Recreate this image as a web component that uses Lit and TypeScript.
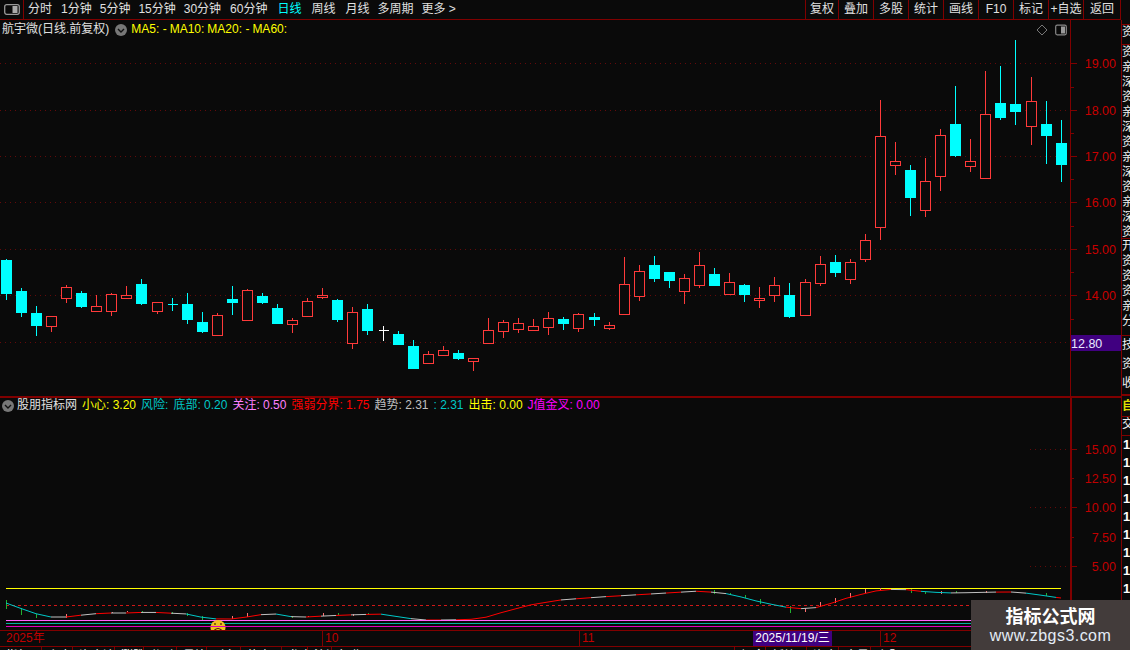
import { LitElement, html, css, svg } from "lit";
import { customElement } from "lit/decorators.js";

type C = [number, number, number, number, number]; // 0 red / 1 cyan / 2 white, bodyTop, bodyBottom, wickTop, wickBottom
const CANDLES: C[] = [
  [1,260,294,259,300],[1,291,313,288,317],[1,313,326,306,336],[0,316,326,316,332],[0,287,298,285,303],
  [1,293,307,291,308],[0,306,311,295,311],[0,294,311,293,316],[0,295,298,286,298],[1,284,304,279,305],
  [0,302,311,302,314],[1,304,304,298,311],[1,304,320,293,324],[1,322,332,312,333],[0,315,335,313,336],
  [1,299,303,286,315],[0,290,320,289,320],[1,296,303,293,304],[1,308,324,304,324],[0,320,324,318,333],
  [0,301,316,298,316],[0,295,297,288,299],[1,300,320,299,322],[0,312,343,307,349],[1,309,331,304,335],
  [2,330,330,326,341],[1,334,345,331,345],[1,346,369,340,369],[0,354,363,351,363],[0,350,355,346,355],
  [1,353,359,350,360],[0,358,361,358,371],[0,330,343,318,343],[0,322,331,320,338],[0,323,329,318,333],
  [0,326,330,319,330],[0,318,327,312,335],[1,319,324,317,330],[0,314,328,313,332],[1,317,320,313,326],
  [0,325,328,322,330],[0,284,314,257,314],[0,271,296,265,301],[1,265,279,256,282],[1,272,281,272,288],
  [0,278,291,274,304],[0,265,285,252,288],[1,274,286,268,286],[0,282,294,273,294],[1,285,295,284,302],
  [0,298,300,287,308],[0,285,295,277,302],[1,295,317,283,318],[0,282,315,279,315],[0,264,283,256,286],
  [1,262,273,255,277],[0,262,279,259,284],[0,240,259,234,262],[0,136,227,100,240],[0,161,165,142,175],
  [1,170,198,165,216],[0,181,210,158,217],[0,135,176,129,191],[1,124,156,86,157],[0,161,166,139,172],
  [0,114,178,71,178],[1,103,118,66,120],[1,104,112,40,125],[0,101,126,77,145],[1,124,136,101,164],
  [1,143,165,120,182],
];
const cx = (i: number) => Math.floor(6.3 + 15.07 * i);

const CURVE: [number, number][] = [
  [6,603],[17,607],[33,613],[50,617],[67,617],[90,614],[110,613],[133,613],[147,612],[167,613],[187,614],
  [200,617],[217,619],[233,619],[243,618],[253,615],[277,614],[293,617],[310,617],[323,616],[347,615],[380,614],
  [400,617],[420,620],[450,620],[480,619],[500,613],[530,605],[560,600],[600,597],[650,594],[700,591],[730,594],
  [760,602],[790,608],[807,609],[820,607],[850,597],[880,590],[900,589],[927,592],[953,593],[1000,592],[1017,592],
  [1033,594],[1060,598],
];
const curveAt = (x: number) => {
  for (let i = 1; i < CURVE.length; i++) {
    if (x <= CURVE[i][0]) {
      const [a, b] = CURVE[i - 1];
      const [c, d] = CURVE[i];
      return b + ((d - b) * (x - a)) / (c - a);
    }
  }
  return 598;
};
const RED = "#ff0000";
const TEAL = "#00c8c8";
const GREY = "#c0c0c0";
const segColor = (dy: number, x: number) => {
  if (x > 60 && x < 65) return dy > 0 ? TEAL : GREY;
  if (dy > 0.35) return TEAL;
  if (dy < -0.35) return RED;
  return x % 2 ? GREY : RED;
};
const TICKS: [number, number, number, string][] = [
  [6,600,609,"#20b030"],[21,608,615,"#20b030"],[36,614,618,"#20b030"],[66,614,618,"#ff7070"],[112,612,613,"#ff7070"],
  [127,611,612,"#ff7070"],[142,611,613,"#20b030"],[172,612,614,"#20b030"],[187,613,616,"#20b030"],[202,616,620,"#20b030"],
  [232,616,619,"#ff7070"],[247,613,617,"#ff7070"],[292,616,618,"#20b030"],[308,616,617,"#ff7070"],[323,613,616,"#ff7070"],
  [338,613,615,"#20b030"],[353,614,616,"#ff7070"],[368,613,615,"#20b030"],[714,590,594,"#20b030"],[730,593,595,"#20b030"],
  [745,595,598,"#20b030"],[760,599,604,"#20b030"],[790,606,613,"#20b030"],[805,608,612,"#ff7070"],[820,602,607,"#ff7070"],
  [835,598,603,"#ff7070"],[850,593,598,"#ff7070"],[865,589,593,"#ff7070"],[880,588,590,"#ff7070"],[911,589,593,"#20b030"],
  [925,592,594,"#20b030"],[941,591,594,"#ff7070"],[956,591,593,"#20b030"],[986,591,593,"#ff7070"],[1046,593,596,"#20b030"],
];
const GRID_TOP = [63.5, 110.5, 156.5, 202.5, 249.5, 295.5, 342.5];
const TOP_LABELS: [number, string][] = [[63.5,"19.00"],[110.5,"18.00"],[156.5,"17.00"],[202.5,"16.00"],[249.5,"15.00"],[295.5,"14.00"]];
const LOW_LABELS: [number, string][] = [[449,"15.00"],[478.5,"12.50"],[507.5,"10.00"],[537.5,"7.50"],[566.5,"5.00"]];
const GRID_LOW = [449.5, 507.5, 566.5];

const RIGHT_BTNS: [string, number][] = [["复权",33],["叠加",35],["多股",35],["统计",35],["画线",35],["F10",35],["标记",35],["+自选",35],["返回",37]];
const TOP_STRIP = ["资","亲","深","资","亲","深","资","亲","深","资","亲","深","资"];
const BOTTOM_TABS: [string, number][] = [
  ["指标",42],["主力",31],["资金流",42],["涨跌",29],["分时",33],["量比",30],["财务",34],["热点",41],["龙虎",26],["沪深",24],
  ["行业",403],["概念",31],["板块",41],["资金",32],["全景",32],["主题",259],
];

const chevron = html`<svg class="chev" viewBox="0 0 12 12"><circle cx="6" cy="6" r="6" fill="#777"/><path d="M3 5 L6 8 L9 5" fill="none" stroke="#111" stroke-width="1.4"/></svg>`;

@customElement("app-root")
export class AppRoot extends LitElement {
  static styles = css`
    :host { display: block; width: 1130px; height: 650px; background: #0a0a0a; overflow: hidden; position: relative;
      font-family: "Liberation Sans", "Noto Sans CJK SC", sans-serif; font-size: 12px; color: #e0e0e0; }
    .toolbar { display: flex; height: 19px; border-bottom: 1px solid #800000; width: 1121px; }
    .logo { width: 23px; border-right: 1px solid #800000; display: flex; align-items: center; justify-content: center; }
    .logo svg { width: 16px; height: 11px; }
    .tabs { display: flex; flex: 1; align-items: center; padding-left: 4px; gap: 8px; line-height: 19px; white-space: nowrap; }
    .tabs .on { color: #00ffff; }
    .tabs .m1 { margin-left: 1px; }
    .tabs .m2 { margin-left: 2px; }
    .btns { display: flex; height: 19px; border-left: 1px solid #800000; }
    .btn { border-right: 1px solid #800000; text-align: center; line-height: 19px; box-sizing: border-box; white-space: nowrap; }
    .main { display: flex; height: 631px; }
    .charts { width: 1121px; display: flex; flex-direction: column; }
    .strip { width: 9px; border-left: 1px solid #800000; box-sizing: border-box; display: flex; flex-direction: column; overflow: hidden; }
    .panel { display: flex; }
    .p1 { height: 376px; border-bottom: 2px solid #800000; }
    .p2 { height: 232px; }
    .plot { position: relative; width: 1070px; flex: none; }
    .plot > svg, .axis > svg { display: block; width: 100%; height: 100%; }
    .axis { width: 51px; flex: none; border-left: 1px solid #800000; box-sizing: border-box; }
    .p2 .axis { border-left-width: 2px; }
    .legend { position: absolute; left: 2px; top: 2px; display: flex; align-items: center; white-space: nowrap; line-height: 15px; height: 15px; }
    .chev { width: 12px; height: 12px; flex: none; }
    .legend.top .chev { margin: 0 4px 0 6px; }
    .legend.top .ma { color: #ffff00; margin-right: 3px; }
    .legend.low { left: 2px; top: 0; gap: 5px; }
    .legend.low .chev { margin-right: -2px; }
    .pen { position: absolute; right: 3px; top: 4px; display: flex; gap: 7px; align-items: center; }
    .pen svg { width: 12px; height: 12px; }
    .c-y { color: #ffff00; } .c-t { color: #00c8c8; } .c-p { color: #ff80ff; } .c-r { color: #ff0000; } .c-g { color: #c0c0c0; } .c-m { color: #ff00ff; }
    .time { height: 15px; border-top: 1px solid #800000; border-bottom: 1px solid #800000; position: relative; color: #c00000; display: flex; align-items: center; white-space: nowrap; line-height: 15px; }
    .seg { box-sizing: border-box; height: 100%; padding-left: 2px; flex: none; }
    .seg.mark { border-left: 1px solid #800000; }
    .date { position: absolute; left: 753px; top: 0; width: 79px; height: 15px; background: #400080; color: #fff; text-align: center; }
    .bottom { display: flex; height: 4px; overflow: hidden; }
    .bt { box-sizing: border-box; border-right: 1px solid #800000; padding: 3px 0 0 6px; color: #fff; line-height: 13px; overflow: hidden; white-space: nowrap; flex: none; }
    .cell { box-sizing: border-box; overflow: hidden; border-bottom: 1px solid #800000; color: #f0f0f0; white-space: nowrap; }
    .cell div { height: 15px; line-height: 15px; }
    .cell .tall { height: 19px; line-height: 19px; }
    .pad { height: 5px; border-bottom: 1px solid #800000; box-sizing: border-box; }
    .yellow { color: #e0e000; font-weight: bold; line-height: 20px; }
    .one { height: 18px; line-height: 18px; font-weight: bold; color: #fff; font-size: 13px; padding-left: 1px; }
    .wm { position: absolute; right: 0; bottom: 0; width: 159px; height: 50px; background: #433c3b; display: flex; flex-direction: column; align-items: center; }
    .wm b { color: #fff; font-size: 18px; line-height: 22px; margin-top: 4px; font-family: "Noto Sans CJK SC", sans-serif; }
    .wm span { color: #e4ecf6; font-size: 16px; line-height: 20px; letter-spacing: 0.45px; }
    text { font-family: "Liberation Sans", sans-serif; font-size: 12.5px; }
  `;

  private candles() {
    return CANDLES.map((c, i) => {
      const x = cx(i) + 0.5;
      const col = c[0] === 1 ? "#00ffff" : c[0] === 2 ? "#ffffff" : "#ff3a3a";
      const wick = svg`<line x1=${x} x2=${x} y1=${c[3]} y2=${c[4]} stroke=${col}/>`;
      const h = c[2] - c[1];
      let body;
      if (c[0] === 2 || (c[0] === 1 && h === 0)) {
        body = svg`<line x1=${x - 5} x2=${x + 5} y1=${c[1] + 0.5} y2=${c[1] + 0.5} stroke=${col}/>`;
      } else if (c[0] === 1) {
        body = svg`<rect x=${x - 5.5} y=${c[1]} width="11" height=${h} fill=${col}/>`;
      } else {
        body = svg`<rect x=${x - 5} y=${c[1] + 0.5} width="10" height=${h} fill="#0a0a0a" stroke=${col}/>`;
      }
      return svg`${wick}${body}`;
    });
  }

  private curve() {
    const out = [];
    for (let x = 6; x < 1061; x += 15) {
      const nx = Math.min(x + 15, 1061);
      const a = curveAt(x);
      const b = curveAt(nx);
      out.push(svg`<line x1=${x} x2=${nx} y1=${a} y2=${b} stroke=${segColor((b - a) / 15 * 3, Math.round(x / 15))} stroke-width="1"/>`);
    }
    return out;
  }

  render() {
    return html`
      <div class="toolbar">
        <div class="logo"><svg viewBox="0 0 16 11"><rect x="0.7" y="0.7" width="14.6" height="9.6" rx="2" fill="none" stroke="#999" stroke-width="1.3"/><rect x="8.5" y="2" width="5" height="7" fill="#aaa"/></svg></div>
        <div class="tabs">
          <span>分时</span><span class="m1">1分钟</span><span>5分钟</span><span>15分钟</span><span>30分钟</span><span class="m1">60分钟</span>
          <span class="on m2">日线</span><span class="m2">周线</span><span class="m2">月线</span><span>多周期</span><span>更多 &gt;</span>
        </div>
        <div class="btns">
          ${RIGHT_BTNS.map(([t, w]) => html`<div class="btn" style="width:${w}px">${t}</div>`)}
        </div>
      </div>
      <div class="main">
        <div class="charts">
          <div class="panel p1">
            <div class="plot">
              <svg viewBox="0 20 1070 376" shape-rendering="crispEdges">
                ${GRID_TOP.map((y) => svg`<line x1="0" x2="1070" y1=${y} y2=${y} stroke="#640a0a" stroke-dasharray="1 4"/>`)}
                ${this.candles()}
              </svg>
              <div class="legend top">
                <span>航宇微(日线.前复权)</span>${chevron}
                <span class="ma">MA5: -</span><span class="ma">MA10:</span><span class="ma">MA20: -</span><span class="ma">MA60:</span>
              </div>
              <div class="pen">
                <svg viewBox="0 0 12 12"><path d="M6 1 L11 6 L6 11 L1 6 Z" fill="none" stroke="#777"/></svg>
                <svg viewBox="0 0 12 12"><rect x="0.7" y="1.2" width="10.6" height="9.6" rx="1.5" fill="none" stroke="#888" stroke-width="1.2"/><rect x="6" y="2.5" width="4" height="7" fill="#999"/></svg>
              </div>
            </div>
            <div class="axis">
              <svg viewBox="1071 20 50 376" shape-rendering="crispEdges">
                ${TOP_LABELS.map(([y]) => svg`<line x1="1071" x2="1077" y1=${y} y2=${y} stroke="#800000"/>`)}
                ${[87, 133.5, 179.5, 226, 272.5, 319].map((y) => svg`<line x1="1071" x2="1074" y1=${y} y2=${y} stroke="#800000"/>`)}
                <g shape-rendering="auto">${TOP_LABELS.map(([y, t]) => svg`<text x="1116" y=${y + 4.5} text-anchor="end" fill="#c80000">${t}</text>`)}</g>
                <rect x="1071" y="335" width="50" height="16" fill="#400080"/>
                <g shape-rendering="auto"><text x="1071" y="347.5" fill="#e8e8ff">12.80</text></g>
              </svg>
            </div>
          </div>
          <div class="panel p2">
            <div class="plot">
              <svg viewBox="0 398 1070 232">
                <g shape-rendering="crispEdges">
                  ${GRID_LOW.map((y) => svg`<line x1="1030" x2="1070" y1=${y} y2=${y} stroke="#640a0a" stroke-dasharray="1 4"/>`)}
                  <line x1="6" x2="1061" y1="588.5" y2="588.5" stroke="#ffff00"/>
                  <line x1="6" x2="1061" y1="605.5" y2="605.5" stroke="#d01818" stroke-dasharray="3 3"/>
                  ${TICKS.map(([x, a, b, col]) => svg`<line x1=${x + 0.5} x2=${x + 0.5} y1=${a} y2=${b} stroke=${col}/>`)}
                </g>
                ${this.curve()}
                <g shape-rendering="crispEdges">
                  <line x1="6" x2="1070" y1="620.5" y2="620.5" stroke="#ff60ff"/>
                  <line x1="6" x2="1070" y1="623.5" y2="623.5" stroke="#00b0a0"/>
                </g>
                <circle cx="218" cy="627.5" r="7.5" fill="#f0c020"/>
                <circle cx="215" cy="624" r="0.9" fill="#5a3800"/><circle cx="221" cy="624" r="0.9" fill="#5a3800"/>
                <line x1="6" x2="1070" y1="626.5" y2="626.5" stroke="#e000c0" shape-rendering="crispEdges"/>
                <path d="M214.5 630 Q218 627 221.5 630" fill="none" stroke="#402000" stroke-width="1.2"/>
              </svg>
              <div class="legend low">
                ${chevron}<span>股朋指标网</span>
                <span class="c-y">小心: 3.20</span>
                <span class="c-t">风险:</span>
                <span class="c-t">底部: 0.20</span>
                <span class="c-p">关注: 0.50</span>
                <span class="c-r">强弱分界: 1.75</span>
                <span class="c-g">趋势: 2.31</span>
                <span class="c-t">: 2.31</span>
                <span class="c-y">出击: 0.00</span>
                <span class="c-m">J值金叉: 0.00</span>
              </div>
            </div>
            <div class="axis">
              <svg viewBox="1072 398 49 232" shape-rendering="crispEdges">
                ${LOW_LABELS.map(([y], i) => svg`<line x1="1072" x2=${i % 2 ? 1074 : 1077} y1=${y} y2=${y} stroke="#800000"/>`)}
                <g shape-rendering="auto">${LOW_LABELS.map(([y, t]) => svg`<text x="1116" y=${y + 4.5} text-anchor="end" fill="#c00000">${t}</text>`)}</g>
              </svg>
            </div>
          </div>
          <div class="time">
            <div class="seg" style="width:322px;padding-left:6px">2025年</div>
            <div class="seg mark" style="width:257px">10</div>
            <div class="seg mark" style="width:301px">11</div>
            <div class="seg mark" style="width:241px">12</div>
            <div class="date">2025/11/19/三</div>
          </div>
          <div class="bottom">
            ${BOTTOM_TABS.map(([t, w]) => html`<div class="bt" style="width:${w}px">${t}</div>`)}
          </div>
        </div>
        <div class="strip">
          <div class="pad"></div>
          <div class="cell" style="height:20px"><div>资</div></div>
          <div class="cell" style="height:194px">${TOP_STRIP.map((t) => html`<div>${t}</div>`)}</div>
          <div class="cell" style="height:97px">${["开","资","资","资","亲","分"].map((t) => html`<div>${t}</div>`)}</div>
          <div class="cell" style="height:60px;border-bottom-width:2px">${["技","资","收"].map((t) => html`<div class="tall">${t}</div>`)}</div>
          <div class="cell yellow" style="height:21px">自</div>
          <div class="cell" style="height:19px"><div>交</div></div>
          ${["15","15","15","15","15","15","15","15","15"].map((t) => html`<div class="one">${t}</div>`)}
        </div>
      </div>
      <div class="wm"><b>指标公式网</b><span>www.zbgs3.com</span></div>
    `;
  }
}
